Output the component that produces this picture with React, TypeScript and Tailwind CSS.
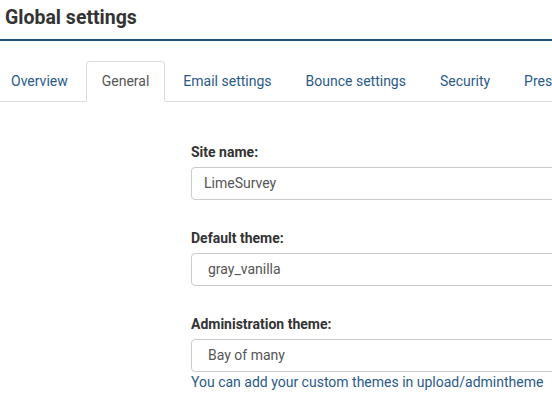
import React from 'react';

const tabs = ['Overview', 'General', 'Email settings', 'Bounce settings', 'Security', 'Presentation'];

function Field({ label, value, select }: { label: string; value: string; select?: boolean }) {
  return (
    <div className="mb-[28px]">
      <label className="block text-[14px] leading-[20px] font-bold text-[#333] mb-[5px]">{label}</label>
      <div
        className={`h-[33px] w-[420px] border border-[#ccc] rounded-[4px] flex items-center text-[14px] text-[#555] ${
          select ? 'pl-[16px]' : 'pl-[12px]'
        }`}
      >
        {value}
      </div>
    </div>
  );
}

export default function App() {
  return (
    <div className="w-[552px] h-[405px] overflow-hidden bg-white" style={{ fontFamily: 'Roboto, "Liberation Sans", sans-serif' }}>
      <div className="h-[41px] border-b-[2px] border-[#1e4f79] flex items-center pl-[5px] pb-[3px]">
        <h1 className="text-[19.5px] font-bold text-[#333]">Global settings</h1>
      </div>

      <ul className="mt-[20px] flex border-b border-[#ddd] whitespace-nowrap ml-[-5px]">
        {tabs.map((t) => {
          const active = t === 'General';
          return (
            <li
              key={t}
              className={`mr-[2px] mb-[-1px] px-[15px] h-[41px] flex items-center text-[14px] rounded-t-[4px] border ${
                active ? 'border-[#ddd] border-b-white bg-white text-[#555]' : 'border-transparent text-[#2a5a8a]'
              }`}
            >
              {t}
            </li>
          );
        })}
      </ul>

      <div className="pl-[191px] pt-[40px]">
        <Field label="Site name:" value="LimeSurvey" />
        <Field label="Default theme:" value="gray_vanilla" select />
        <div>
          <label className="block text-[14px] leading-[20px] font-bold text-[#333] mb-[5px]">Administration theme:</label>
          <div className="h-[33px] w-[420px] border border-[#ccc] rounded-[4px] flex items-center pl-[16px] text-[14px] text-[#555]">
            Bay of many
          </div>
          <p className="text-[14px] leading-[20px] text-[#2a5a8a] whitespace-nowrap">You can add your custom themes in upload/admintheme</p>
        </div>
      </div>
    </div>
  );
}
